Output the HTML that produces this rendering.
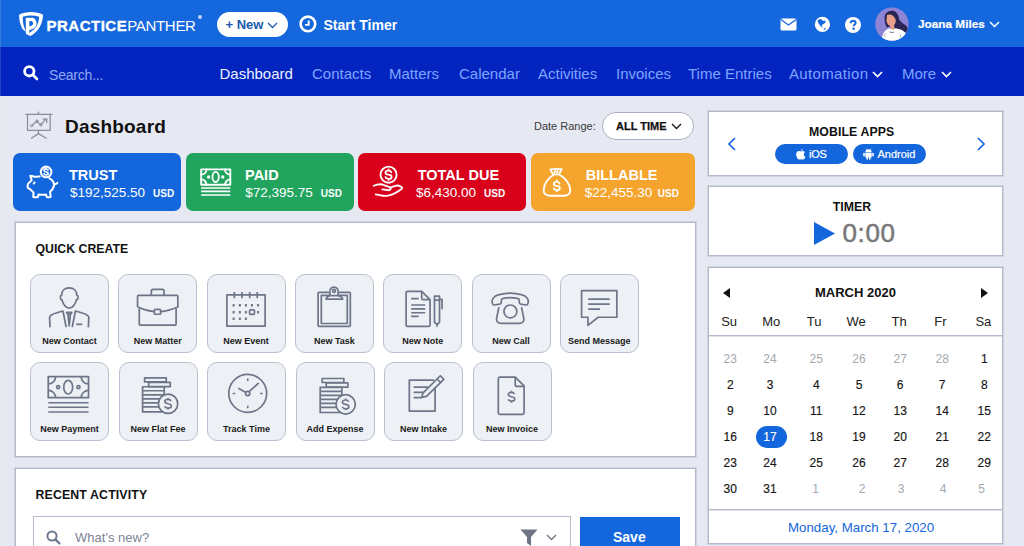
<!DOCTYPE html>
<html><head><meta charset="utf-8">
<style>
*{box-sizing:border-box;margin:0;padding:0}
html,body{width:1024px;height:546px;overflow:hidden}
body{font-family:"Liberation Sans",sans-serif;background:#E6E9F2;position:relative;color:#111}
.a{position:absolute}
.nw{white-space:nowrap}
#top{left:0;top:0;width:1024px;height:47px;background:#1467DC}
#nav{left:0;top:47px;width:1024px;height:49px;background:#0324BE}
.navi{top:64px;font-size:15px;color:#7FA4FF;white-space:nowrap;line-height:20px}
.card{top:153px;height:58px;border-radius:7px;color:#fff}
.ct{position:absolute;left:56px;top:13.5px;font-size:14.5px;font-weight:700;white-space:nowrap;line-height:17px}
.cv{position:absolute;left:57px;top:31px;font-size:13.5px;white-space:nowrap;line-height:17px}
.cv b{font-size:10px;margin-left:8px}
.panel{background:#fff;border:1px solid #B3B9C8;box-shadow:0 0 0 1px rgba(179,185,200,.45)}
.tile{width:79px;height:79px;border:1px solid #B9C0D0;border-radius:10px;background:#EDF0F5}
.tl{position:absolute;left:0;right:0;top:61px;text-align:center;font-size:9px;font-weight:700;color:#1a1a1a;white-space:nowrap;line-height:11px}
.tile svg{position:absolute;left:19px;top:12px}
.cal{font-size:12px;color:#111;text-align:center;width:30px;line-height:14px;white-space:nowrap}
.gr{color:#A5A8AE}
.dk{color:#151515;-webkit-text-stroke:0.15px #151515}
.wh{color:#fff;-webkit-text-stroke:0.15px #fff}
.hd{font-size:13px;color:#222;width:40px;text-align:center;line-height:16px;white-space:nowrap}
</style></head><body>

<!-- TOP BAR -->
<div id="top" class="a"></div>
<div class="a" style="left:0;top:0;width:1px;height:546px;background:rgba(255,255,255,.13);z-index:5"></div>
<svg class="a" style="left:14px;top:8px" width="34" height="32" viewBox="0 0 580 546"><path d="M85,115 C200,55 380,55 495,115 C492,270 420,400 280,478 L205,445 L200,395 C175,385 150,372 140,350 C100,270 88,200 85,115Z" fill="#fff"/><path d="M150,150 C240,122 340,122 428,150 C425,265 372,360 262,425 L205,400 C175,340 158,280 153,230 C150,200 150,175 150,150Z" fill="#1467DC"/><path d="M200,165 H300 C355,165 385,205 385,260 C385,315 350,350 300,365 L262,375 V440 L205,445 Z M262,222 V310 L288,305 C310,300 325,285 325,262 C325,238 310,222 288,222Z" fill="#fff" fill-rule="evenodd"/></svg>
<div class="a nw" style="left:46.5px;top:15.5px;font-size:15px;line-height:20px;color:#fff"><span style="font-weight:700;letter-spacing:0.5px;-webkit-text-stroke:0.35px #fff">PRACTICE</span><span style="letter-spacing:-0.3px">PANTHER</span></div>
<div class="a" style="left:198px;top:14.5px;width:4px;height:4px;border-radius:50%;background:#BFD2F5"></div>

<div class="a" style="left:217px;top:12px;width:71px;height:25px;border-radius:13px;background:#fff"></div>
<div class="a nw" style="left:225.5px;top:16px;font-size:13px;font-weight:700;color:#2059AE;line-height:17px">+ New</div>
<svg class="a" style="left:266.5px;top:22px" width="11" height="7" viewBox="0 0 11 7"><path d="M1 1 L5.5 5.5 L10 1" stroke="#2059AE" stroke-width="1.3" fill="none"/></svg>

<svg class="a" style="left:299px;top:15.3px" width="18" height="18" viewBox="0 0 18 18"><circle cx="8.9" cy="8.9" r="7.3" stroke="#fff" stroke-width="2.6" fill="none"/><path d="M9.7 5.5 V9.9 H6" stroke="#fff" stroke-width="1.9" fill="none"/></svg>
<div class="a nw" style="left:323.5px;top:17px;font-size:14px;font-weight:700;color:#fff;line-height:17px">Start Timer</div>

<svg class="a" style="left:780px;top:18px" width="17" height="13" viewBox="0 0 17 13"><rect x="0.5" y="0.5" width="16" height="12" rx="1.5" fill="#fff"/><path d="M0.8 1.5 L8.5 7 L16.2 1.5" stroke="#1467DC" stroke-width="1.3" fill="none"/></svg>
<svg class="a" style="left:810px;top:12px" width="26" height="26" viewBox="0 0 546 546"><circle cx="261" cy="261" r="160" fill="#fff"/><path d="M158,190 C170,160 200,148 228,152 C250,150 262,165 258,180 C270,190 285,178 300,178 C325,180 335,200 320,225 C305,245 280,250 262,262 C245,275 240,295 258,318 C268,330 282,335 275,340 C255,335 230,315 215,290 C195,260 165,225 158,190Z" fill="#1467DC"/><path d="M285,358 C295,340 320,335 332,348 C335,362 315,378 295,375Z" fill="#1467DC"/></svg>
<svg class="a" style="left:845px;top:16.5px" width="16" height="16" viewBox="0 0 16 16"><circle cx="8" cy="8" r="8" fill="#fff"/><path d="M5.6 6.2 C5.6 4.6 6.7 3.8 8.1 3.8 C9.6 3.8 10.6 4.7 10.6 5.9 C10.6 7.6 8.7 7.6 8.7 9.2" stroke="#1467DC" stroke-width="2" fill="none"/><circle cx="8.6" cy="11.7" r="1.2" fill="#1467DC"/></svg>

<svg class="a" style="left:872px;top:4px" width="40" height="40" viewBox="0 0 546 546"><defs><clipPath id="avc"><circle cx="272" cy="275" r="228"/></clipPath></defs><circle cx="272" cy="275" r="228" fill="#8E84D6"/><g clip-path="url(#avc)"><path d="M172,205 C165,130 215,88 280,92 C345,98 365,160 372,212 C392,255 445,272 475,305 C495,335 485,365 462,385 L330,362 C300,332 292,302 292,282 L205,322 C182,292 172,245 172,205Z" fill="#2A2552"/><path d="M205,150 C245,128 302,150 322,212 C332,262 302,302 262,302 C222,302 202,262 197,222 Z" fill="#E9A088"/><path d="M250,285 L300,285 L312,352 L258,352Z" fill="#E9A088"/><path d="M130,520 C135,410 170,352 240,330 L265,348 C282,354 302,348 322,330 C402,342 452,372 468,422 C470,470 450,510 420,520 Z" fill="#fff"/><path d="M240,382 Q270,395 300,384" stroke="#555a80" stroke-width="12" fill="none"/><path d="M180,400 L172,450 M385,410 L390,455" stroke="#9aa0b8" stroke-width="10" fill="none"/></g></svg>
<div class="a nw" style="left:918px;top:17px;font-size:11.8px;font-weight:700;color:#fff;line-height:14px;-webkit-text-stroke:0.2px #fff">Joana Miles</div>
<svg class="a" style="left:989px;top:21px" width="11" height="7" viewBox="0 0 11 7"><path d="M1 1 L5.5 5.5 L10 1" stroke="#fff" stroke-width="1.5" fill="none"/></svg>

<!-- NAV -->
<div id="nav" class="a"></div>
<svg class="a" style="left:23px;top:65px" width="16" height="16" viewBox="0 0 16 16"><circle cx="6.3" cy="6.3" r="4.7" stroke="#fff" stroke-width="2.8" fill="none"/><path d="M10 10 L14 14" stroke="#fff" stroke-width="2.6" stroke-linecap="round"/></svg>
<div class="a navi" style="left:49px;top:65px;color:#8FAAF2;font-size:14px;letter-spacing:-0.2px">Search...</div>
<div class="a navi" style="left:219.5px;color:#EEF1FF">Dashboard</div>
<div class="a navi" style="left:312px">Contacts</div>
<div class="a navi" style="left:389px">Matters</div>
<div class="a navi" style="left:459px">Calendar</div>
<div class="a navi" style="left:538px">Activities</div>
<div class="a navi" style="left:616px">Invoices</div>
<div class="a navi" style="left:688px">Time Entries</div>
<div class="a navi" style="left:789px;letter-spacing:0.35px">Automation</div>
<svg class="a" style="left:872px;top:71px" width="11" height="7" viewBox="0 0 11 7"><path d="M1 1 L5.5 5.5 L10 1" stroke="#fff" stroke-width="1.7" fill="none"/></svg>
<div class="a navi" style="left:902px">More</div>
<svg class="a" style="left:941px;top:71px" width="11" height="7" viewBox="0 0 11 7"><path d="M1 1 L5.5 5.5 L10 1" stroke="#fff" stroke-width="1.7" fill="none"/></svg>

<!-- DASHBOARD HEADER -->
<svg class="a" style="left:15px;top:100px" width="48" height="50" viewBox="0 0 307 320"><g stroke="#8A8F9C" stroke-width="8" fill="none" stroke-linecap="round"><path d="M150,78 V92 M70,92 H237"/><path d="M80,92 V195 H225 V92"/><path d="M150,195 V215 L105,245 M150,215 L200,245"/><path d="M110,162 L138,136 L163,158 L200,122"/><circle cx="106" cy="165" r="7" stroke-width="6"/><circle cx="140" cy="134" r="7" stroke-width="6"/><circle cx="165" cy="160" r="7" stroke-width="6"/><path d="M180,122 H203 V145" /></g></svg>
<div class="a nw" style="left:65px;top:116px;font-size:19px;font-weight:700;color:#111;line-height:22px;letter-spacing:0.2px">Dashboard</div>

<div class="a nw" style="left:534px;top:119px;font-size:11px;color:#3A3A3A;line-height:14px">Date Range:</div>
<div class="a" style="left:602px;top:112px;width:91.5px;height:27.5px;border-radius:14px;background:#fff;border:1px solid #A9B0BF"></div>
<div class="a nw" style="left:616px;top:119px;font-size:11px;font-weight:700;color:#111;line-height:14px;-webkit-text-stroke:0.25px #111">ALL TIME</div>
<svg class="a" style="left:671px;top:123px" width="11" height="7" viewBox="0 0 11 7"><path d="M1 1 L5.5 5.5 L10 1" stroke="#111" stroke-width="1.3" fill="none"/></svg>

<!-- CARDS -->
<div class="a card" style="left:13px;width:168px;background:#1466DC">
  
  <div class="ct">TRUST</div><div class="cv">$192,525.50<b>USD</b></div>
</div>
<div class="a card" style="left:185.75px;width:168px;background:#21A55E">
  <div class="ct" style="left:59.3px">PAID</div><div class="cv" style="left:59.5px">$72,395.75<b>USD</b></div>
</div>
<div class="a card" style="left:358px;width:168px;background:#D9001C">
  <div class="ct" style="left:59.7px">TOTAL DUE</div><div class="cv" style="left:58px">$6,430.00<b>USD</b></div>
</div>
<div class="a card" style="left:530.75px;width:164.25px;background:#F5A42E">
  <div class="ct" style="left:55px">BILLABLE</div><div class="cv" style="left:54px">$22,455.30<b style="margin-left:5.5px">USD</b></div>
</div>

<!-- QUICK CREATE -->
<div class="a panel" style="left:15px;top:222px;width:681px;height:235px"></div>
<div class="a nw" style="left:35.5px;top:242.3px;font-size:12.3px;font-weight:700;color:#111;line-height:14px">QUICK CREATE</div>

<div class="a tile" style="left:30px;top:274px"><div class="tl">New Contact</div></div>
<div class="a tile" style="left:118.3px;top:274px"><div class="tl">New Matter</div></div>
<div class="a tile" style="left:206.6px;top:274px"><div class="tl">New Event</div></div>
<div class="a tile" style="left:294.9px;top:274px"><div class="tl">New Task</div></div>
<div class="a tile" style="left:383.2px;top:274px"><div class="tl">New Note</div></div>
<div class="a tile" style="left:471.5px;top:274px"><div class="tl">New Call</div></div>
<div class="a tile" style="left:559.8px;top:274px"><div class="tl">Send Message</div></div>

<div class="a tile" style="left:30px;top:362px"><div class="tl">New Payment</div></div>
<div class="a tile" style="left:118.5px;top:362px"><div class="tl">New Flat Fee</div></div>
<div class="a tile" style="left:207px;top:362px"><div class="tl">Track Time</div></div>
<div class="a tile" style="left:295.5px;top:362px"><div class="tl">Add Expense</div></div>
<div class="a tile" style="left:384px;top:362px"><div class="tl">New Intake</div></div>
<div class="a tile" style="left:472.5px;top:362px"><div class="tl">New Invoice</div></div>

<div id="icons">
<svg class="a" style="left:40px;top:280px" width="60" height="55" viewBox="0 0 596 546"><g fill="none" stroke="#6E7588" stroke-width="17" stroke-linejoin="round" stroke-linecap="butt"><path d="M290,78 C245,78 215,105 215,150 C198,155 196,190 218,196 C228,240 258,280 290,280 C322,280 352,240 362,196 C384,190 382,155 365,150 C365,105 335,78 290,78Z"/><path d="M100,470 L95,372 C98,345 130,335 228,308 L260,468"/><path d="M480,470 L485,372 C482,345 450,335 352,308 L320,468"/><path d="M264,322 H316 L302,342 H278Z M278,342 L290,455 L302,342"/><path d="M360,440 H420"/></g></svg>
<svg class="a" style="left:128px;top:280px" width="60" height="55" viewBox="0 0 596 546"><g fill="none" stroke="#6E7588" stroke-width="17" stroke-linejoin="round" stroke-linecap="butt"><path d="M232,150 V112 Q232,94 250,94 H340 Q358,94 358,112 V150"/><path d="M95,268 V162 Q95,152 105,152 H485 Q495,152 495,162 V268 C430,295 370,310 324,314 M262,314 C216,310 156,295 95,268"/><path d="M112,282 V438 Q112,448 122,448 H468 Q478,448 478,438 V282"/><rect x="262" y="292" width="62" height="48" rx="8"/></g></svg>
<svg class="a" style="left:216px;top:280px" width="60" height="55" viewBox="0 0 596 546"><g fill="none" stroke="#6E7588" stroke-width="17" stroke-linejoin="round" stroke-linecap="butt"><rect x="108" y="148" width="380" height="310"/><path d="M182,118 V182 M258,118 V182 M335,118 V182 M410,118 V182"/><path d="M175,238 V262 M237,238 V262 M297,238 V262 M357,238 V262 M418,238 V262 M175,308 V332 M237,308 V332 M297,308 V332 M418,308 V332 M175,373 V397 M237,373 V397 M297,373 V397 " stroke-width="20"/><rect x="334" y="296" width="48" height="46" rx="9"/></g></svg>
<svg class="a" style="left:304px;top:280px" width="60" height="55" viewBox="0 0 596 546"><g fill="none" stroke="#6E7588" stroke-width="17" stroke-linejoin="round" stroke-linecap="butt"><rect x="140" y="122" width="320" height="338" rx="8"/><rect x="172" y="152" width="258" height="280"/><path d="M258,152 V125 A42,42 0 1 1 338,125 V152" fill="#EDF0F5"/><circle cx="298" cy="108" r="14"/><path d="M220,190 Q225,160 258,155 H338 Q375,160 385,190 Z" fill="#EDF0F5"/></g></svg>
<svg class="a" style="left:392px;top:280px" width="60" height="55" viewBox="0 0 596 546"><g fill="none" stroke="#6E7588" stroke-width="17" stroke-linejoin="round" stroke-linecap="butt"><path d="M140,126 Q140,112 154,112 H295 L378,195 V446 Q378,460 364,460 H154 Q140,460 140,446 Z"/><path d="M295,112 V180 Q295,195 310,195 H378"/><path d="M190,185 H265 M190,248 H330 M190,287 H330 M190,325 H330 M190,362 H265"/><path d="M422,160 H472 V200 H422Z M422,200 V420 L447,442 L472,420 V200 M472,192 H497 V290 M447,442 V465"/></g></svg>
<svg class="a" style="left:480px;top:280px" width="60" height="55" viewBox="0 0 596 546"><g fill="none" stroke="#6E7588" stroke-width="17" stroke-linejoin="round" stroke-linecap="butt"><path d="M125,235 C110,200 130,160 190,145 C260,125 340,125 410,145 C470,160 490,200 475,235 Q470,250 455,248 L405,240 Q390,238 390,222 V200 Q390,185 370,182 C330,175 270,175 230,182 Q212,185 212,200 V222 Q212,238 195,240 L145,248 Q130,250 125,235Z"/><path d="M188,270 L165,380 Q160,430 210,430 H390 Q440,430 435,380 L412,270"/><circle cx="302" cy="312" r="64"/></g></svg>
<svg class="a" style="left:568px;top:280px" width="60" height="55" viewBox="0 0 596 546"><g fill="none" stroke="#6E7588" stroke-width="17" stroke-linejoin="round" stroke-linecap="butt"><path d="M135,105 H485 V370 H300 L198,450 V370 H135 Z"/><path d="M200,190 H415 M200,240 H415 M200,290 H318"/></g></svg>
<svg class="a" style="left:40px;top:368px" width="60" height="55" viewBox="0 0 596 546"><g fill="none" stroke="#6E7588" stroke-width="17" stroke-linejoin="round" stroke-linecap="butt"><rect x="82" y="85" width="400" height="210"/><path d="M82,158 A73,73 0 0 0 155,85 M409,85 A73,73 0 0 0 482,158 M155,295 A73,73 0 0 0 82,222 M482,222 A73,73 0 0 0 409,295"/><ellipse cx="280" cy="190" rx="44" ry="68"/><circle cx="180" cy="190" r="15"/><circle cx="382" cy="190" r="15"/><path d="M82,345 H482 M82,390 H482 M82,437 H482" stroke-width="16"/></g></svg>
<svg class="a" style="left:128px;top:368px" width="60" height="55" viewBox="0 0 596 546"><g fill="none" stroke="#6E7588" stroke-width="17" stroke-linejoin="round" stroke-linecap="butt"><g transform="translate(0,0)"><rect x="165" y="98" width="215" height="40"/><rect x="205" y="142" width="215" height="42"/><rect x="145" y="186" width="215" height="250"/><path d="M145,226 H360 M145,266 H360 M145,306 H360 M145,346 H360 M145,386 H360"/><circle cx="398" cy="355" r="96" fill="#EDF0F5"/><path d="M426.8,329.8 C423.2,315.4 408.8,311.8 398.0,311.8 C380.0,311.8 365.6,320.4 365.6,333.4 C365.6,349.2 383.6,352.8 398.0,355.0 C416.0,357.2 430.4,362.2 430.4,378.0 C430.4,391.0 416.0,398.2 398.0,398.2 C383.6,398.2 369.2,392.4 365.6,380.2 M398.0,297.4 V311.8 M398.0,398.2 V412.6" stroke-width="16"/></g></g></svg>
<svg class="a" style="left:217px;top:368px" width="60" height="55" viewBox="0 0 596 546"><g fill="none" stroke="#6E7588" stroke-width="17" stroke-linejoin="round" stroke-linecap="butt"><circle cx="305" cy="252" r="188"/><path d="M305,105 V130 M305,374 V400 M156,253 H182 M428,253 H454"/><path d="M212,202 L283,240 M322,233 L415,148"/><circle cx="305" cy="253" r="21"/></g></svg>
<svg class="a" style="left:305px;top:368px" width="60" height="55" viewBox="0 0 596 546"><g fill="none" stroke="#6E7588" stroke-width="17" stroke-linejoin="round" stroke-linecap="butt"><g transform="translate(6,6)"><rect x="165" y="98" width="215" height="40"/><rect x="205" y="142" width="215" height="42"/><rect x="145" y="186" width="215" height="250"/><path d="M145,226 H360 M145,266 H360 M145,306 H360 M145,346 H360 M145,386 H360"/><circle cx="398" cy="355" r="96" fill="#EDF0F5"/><path d="M426.8,329.8 C423.2,315.4 408.8,311.8 398.0,311.8 C380.0,311.8 365.6,320.4 365.6,333.4 C365.6,349.2 383.6,352.8 398.0,355.0 C416.0,357.2 430.4,362.2 430.4,378.0 C430.4,391.0 416.0,398.2 398.0,398.2 C383.6,398.2 369.2,392.4 365.6,380.2 M398.0,297.4 V311.8 M398.0,398.2 V412.6" stroke-width="16"/></g></g></svg>
<svg class="a" style="left:393px;top:368px" width="60" height="55" viewBox="0 0 596 546"><g fill="none" stroke="#6E7588" stroke-width="17" stroke-linejoin="round" stroke-linecap="butt"><path d="M418,190 V428 H162 V120 H408"/><path d="M205,190 H345 M205,242 H305 M205,294 H285"/><path d="M284,292 L297,250 L470,77 L505,112 L332,282 Z M438,109 L473,144"/></g></svg>
<svg class="a" style="left:481px;top:368px" width="60" height="55" viewBox="0 0 596 546"><g fill="none" stroke="#6E7588" stroke-width="17" stroke-linejoin="round" stroke-linecap="butt"><path d="M172,106 Q172,90 188,90 H340 L428,178 V444 Q428,460 412,460 H188 Q172,460 172,444 Z"/><path d="M340,90 V168 Q340,182 354,182 H428"/><path d="M331.8,259.8 C328.2,245.4 313.8,241.8 303.0,241.8 C285.0,241.8 270.6,250.4 270.6,263.4 C270.6,279.2 288.6,282.8 303.0,285.0 C321.0,287.2 335.4,292.2 335.4,308.0 C335.4,321.0 321.0,328.2 303.0,328.2 C288.6,328.2 274.2,322.4 270.6,310.2 M303.0,226.0 V241.8 M303.0,328.2 V344.0" stroke-width="16"/></g></svg>
<svg class="a" style="left:20px;top:155px" width="50" height="50" viewBox="0 0 546 546"><g fill="none" stroke="#fff" stroke-width="22" stroke-linejoin="round" stroke-linecap="round"><path d="M215,234 C195,232 170,240 155,238 C140,234 125,226 112,226 C115,245 125,262 128,275 C110,290 98,300 92,312 C85,315 82,330 84,350 C86,365 95,370 110,372 C125,390 140,402 148,410 L145,455 C145,460 148,462 155,462 L188,462 C195,462 197,458 198,452 L202,432 C230,436 260,436 285,432 L290,452 C292,458 295,462 302,462 L325,462 C332,462 335,458 335,450 L328,402 C350,385 368,360 372,330 C372,295 350,270 322,255"/><path d="M372,318 C385,322 400,315 408,305"/><path d="M150,312 L160,300"/><circle cx="285" cy="185" r="58"/><path d="M305,165 C300,155 292,152 283,152 C270,152 262,160 262,170 C262,190 308,180 308,200 C308,212 298,218 285,218 C274,218 265,212 262,204" stroke-width="18"/></g></svg>
<svg class="a" style="left:190px;top:155px" width="50" height="50" viewBox="0 0 546 546"><g fill="none" stroke="#fff" stroke-width="20" stroke-linejoin="round" stroke-linecap="round"><rect x="122" y="157" width="318" height="168"/><path d="M122,215 A58,58 0 0 0 180,157 M382,157 A58,58 0 0 0 440,215 M180,325 A58,58 0 0 0 122,267 M440,267 A58,58 0 0 0 382,325"/><ellipse cx="280" cy="240" rx="35" ry="55"/><circle cx="203" cy="240" r="8" fill="#fff"/><circle cx="358" cy="240" r="8" fill="#fff"/><path d="M122,360 H440 M122,398 H440 M122,437 H440" stroke-linecap="butt" stroke-width="18"/></g></svg>
<svg class="a" style="left:362px;top:155px" width="50" height="50" viewBox="0 0 546 546"><g fill="none" stroke="#fff" stroke-width="20" stroke-linejoin="round" stroke-linecap="round"><circle cx="290" cy="215" r="88"/><path d="M320.0,188.8 C316.2,173.8 301.2,170.0 290.0,170.0 C271.2,170.0 256.2,179.0 256.2,192.5 C256.2,209.0 275.0,212.8 290.0,215.0 C308.8,217.2 323.8,222.5 323.8,239.0 C323.8,252.5 308.8,260.0 290.0,260.0 C275.0,260.0 260.0,254.0 256.2,241.2 M290.0,156.5 V170.0 M290.0,260.0 V273.5" stroke-width="20"/><path d="M128,336 C165,320 205,312 240,328 L300,350 C322,360 318,382 292,385 L222,376"/><path d="M305,356 L365,336 C385,330 405,334 418,342 L435,355 C442,362 436,372 420,380 C380,410 322,440 272,446 C232,450 192,436 150,430"/></g></svg>
<svg class="a" style="left:535px;top:155px" width="50" height="50" viewBox="0 0 546 546"><g fill="none" stroke="#fff" stroke-width="20" stroke-linejoin="round" stroke-linecap="round"><path d="M168,158 C210,150 250,150 292,155 L262,212 L198,215 Z"/><path d="M212,195 L222,172 M238,195 L250,172"/><path d="M200,218 C140,252 95,320 95,388 C95,428 120,445 170,445 L312,445 C362,445 385,428 385,388 C385,320 335,252 268,216"/><path d="M268.0,311.8 C264.2,296.8 249.2,293.0 238.0,293.0 C219.2,293.0 204.2,302.0 204.2,315.5 C204.2,332.0 223.0,335.8 238.0,338.0 C256.8,340.2 271.8,345.5 271.8,362.0 C271.8,375.5 256.8,383.0 238.0,383.0 C223.0,383.0 208.0,377.0 204.2,364.2 M238.0,278.0 V293.0 M238.0,383.0 V398.0" stroke-width="20"/></g></svg>
</div><!--/icons-->
<!-- RECENT ACTIVITY -->
<div class="a panel" style="left:15px;top:468px;width:681px;height:100px"></div>
<div class="a nw" style="left:35.5px;top:488px;font-size:12.3px;font-weight:700;color:#111;line-height:14px;letter-spacing:0.15px">RECENT ACTIVITY</div>
<div class="a" style="left:33px;top:516px;width:538px;height:50px;border:1px solid #B6BDCC;background:#fff"></div>
<svg class="a" style="left:46px;top:530px" width="15" height="15" viewBox="0 0 15 15"><circle cx="6" cy="6" r="4.6" stroke="#6F7891" stroke-width="2" fill="none"/><path d="M9.4 9.4 L13.5 13.5" stroke="#6F7891" stroke-width="2.2" stroke-linecap="round"/></svg>
<div class="a nw" style="left:75px;top:530px;font-size:13px;color:#7C8496;line-height:15px">What’s new?</div>
<svg class="a" style="left:520px;top:529px" width="18" height="17" viewBox="0 0 18 17"><path d="M0.5 0.5 H17.5 L11 8 V17 L7 14 V8Z" fill="#6F7484"/></svg>
<svg class="a" style="left:546px;top:534px" width="11" height="7" viewBox="0 0 11 7"><path d="M1 1 L5.5 5.5 L10 1" stroke="#6F7484" stroke-width="1.3" fill="none"/></svg>
<div class="a" style="left:580px;top:517px;width:100px;height:40px;background:#1466DC"></div>
<div class="a nw" style="left:613px;top:529px;font-size:14px;font-weight:700;color:#fff;line-height:17px">Save</div>

<!-- RIGHT COLUMN -->
<div class="a panel" style="left:708px;top:111px;width:295px;height:65px"></div>
<div class="a nw" style="left:809px;top:124.8px;font-size:12.3px;font-weight:700;color:#111;line-height:14px;letter-spacing:0.1px">MOBILE APPS</div>
<svg class="a" style="left:727px;top:137px" width="10" height="14" viewBox="0 0 10 14"><path d="M8 1 L2 7 L8 13" stroke="#1466DC" stroke-width="1.7" fill="none"/></svg>
<svg class="a" style="left:976px;top:137px" width="10" height="14" viewBox="0 0 10 14"><path d="M2 1 L8 7 L2 13" stroke="#1466DC" stroke-width="1.7" fill="none"/></svg>
<div class="a" style="left:775px;top:144px;width:73px;height:20px;border-radius:10px;background:#1466DC"></div>
<svg class="a" style="left:795.5px;top:149px" width="10" height="11" viewBox="0 0 10 11"><path d="M5 2.6 C4 2 2.6 1.9 1.5 2.6 C0.3 3.4 0 5 0.3 6.5 C0.6 8.2 1.6 10.4 2.8 10.6 C3.6 10.7 4.2 10.2 5 10.2 C5.8 10.2 6.4 10.7 7.2 10.6 C8.2 10.4 9 9 9.4 7.8 C8.3 7.3 7.7 6.2 7.8 5.2 C7.8 4.3 8.3 3.6 8.9 3.1 C8.3 2.3 7.3 2 6.5 2.1 C5.9 2.2 5.4 2.4 5 2.6Z M5 2 C5 1 5.8 0.2 6.8 0.1 C6.8 1.1 6 1.9 5 2Z" fill="#fff"/></svg><div class="a nw" style="left:809px;top:148px;font-size:11px;color:#fff;line-height:13px;-webkit-text-stroke:0.2px #fff;letter-spacing:-0.2px">iOS</div>
<div class="a" style="left:853px;top:144px;width:73px;height:20px;border-radius:10px;background:#1466DC"></div>
<svg class="a" style="left:863px;top:147.5px" width="11" height="12" viewBox="0 0 11 12"><path d="M2.3 4.3 A3.2 3 0 0 1 8.7 4.3Z" fill="#fff"/><path d="M3 0.6 L3.9 1.9 M8 0.6 L7.1 1.9" stroke="#fff" stroke-width="0.6"/><rect x="2.3" y="4.8" width="6.4" height="4.6" rx="0.6" fill="#fff"/><rect x="0.2" y="4.8" width="1.6" height="3.8" rx="0.8" fill="#fff"/><rect x="9.2" y="4.8" width="1.6" height="3.8" rx="0.8" fill="#fff"/><rect x="3.4" y="8.5" width="1.6" height="3.2" rx="0.8" fill="#fff"/><rect x="6" y="8.5" width="1.6" height="3.2" rx="0.8" fill="#fff"/></svg><div class="a nw" style="left:877.5px;top:148px;font-size:11px;color:#fff;line-height:13px;-webkit-text-stroke:0.2px #fff">Android</div>

<div class="a panel" style="left:708px;top:186px;width:295px;height:70px"></div>
<div class="a nw" style="left:832.8px;top:199.8px;font-size:12.3px;font-weight:700;color:#111;line-height:14px">TIMER</div>
<svg class="a" style="left:813.5px;top:221.5px" width="21" height="23" viewBox="0 0 21 23"><path d="M0 0 L21 11.5 L0 23Z" fill="#1466DC"/></svg>
<div class="a nw" style="left:842.5px;top:218px;font-size:26px;color:#787878;line-height:30px;letter-spacing:0.6px;-webkit-text-stroke:0.5px #787878">0:00</div>

<div class="a panel" style="left:708px;top:267px;width:295px;height:277px"></div>
<div class="a nw" style="left:815px;top:285px;font-size:13px;font-weight:700;color:#111;line-height:15px">MARCH 2020</div>
<svg class="a" style="left:723px;top:288px" width="7" height="10" viewBox="0 0 7 10"><path d="M7 0 L0 5 L7 10Z" fill="#111"/></svg>
<svg class="a" style="left:981px;top:288px" width="7" height="10" viewBox="0 0 7 10"><path d="M0 0 L7 5 L0 10Z" fill="#111"/></svg>
<div class="a" style="left:709px;top:335px;width:293px;height:1px;background:#B3B9C8"></div><div class="a" style="left:709px;top:336px;width:293px;height:1px;background:rgba(179,185,200,.4)"></div>
<div class="a" style="left:709px;top:509px;width:293px;height:1px;background:#B3B9C8"></div><div class="a" style="left:709px;top:510px;width:293px;height:1px;background:rgba(179,185,200,.4)"></div>
<div class="a nw" style="left:788px;top:520px;font-size:13.3px;color:#1466DC;line-height:15px">Monday, March 17, 2020</div>
<div id="calgrid">
<div class="a hd" style="left:709.1px;top:314.0px">Su</div>
<div class="a hd" style="left:751.2px;top:314.0px">Mo</div>
<div class="a hd" style="left:794.1px;top:314.0px">Tu</div>
<div class="a hd" style="left:836.2px;top:314.0px">We</div>
<div class="a hd" style="left:879.1px;top:314.0px">Th</div>
<div class="a hd" style="left:920.5px;top:314.0px">Fr</div>
<div class="a hd" style="left:963.4px;top:314.0px">Sa</div>
<div class="a cal gr" style="left:715.3px;top:352.2px">23</div>
<div class="a cal gr" style="left:755.0px;top:352.2px">24</div>
<div class="a cal gr" style="left:801.3px;top:352.2px">25</div>
<div class="a cal gr" style="left:844.0px;top:352.2px">26</div>
<div class="a cal gr" style="left:885.2px;top:352.2px">27</div>
<div class="a cal gr" style="left:927.2px;top:352.2px">28</div>
<div class="a cal dk" style="left:969.3px;top:352.2px">1</div>
<div class="a cal dk" style="left:715.3px;top:378.0px">2</div>
<div class="a cal dk" style="left:755.0px;top:378.0px">3</div>
<div class="a cal dk" style="left:801.3px;top:378.0px">4</div>
<div class="a cal dk" style="left:844.0px;top:378.0px">5</div>
<div class="a cal dk" style="left:885.2px;top:378.0px">6</div>
<div class="a cal dk" style="left:927.2px;top:378.0px">7</div>
<div class="a cal dk" style="left:969.3px;top:378.0px">8</div>
<div class="a cal dk" style="left:715.3px;top:403.8px">9</div>
<div class="a cal dk" style="left:755.0px;top:403.8px">10</div>
<div class="a cal dk" style="left:801.3px;top:403.8px">11</div>
<div class="a cal dk" style="left:844.0px;top:403.8px">12</div>
<div class="a cal dk" style="left:885.2px;top:403.8px">13</div>
<div class="a cal dk" style="left:927.2px;top:403.8px">14</div>
<div class="a cal dk" style="left:969.3px;top:403.8px">15</div>
<div class="a cal dk" style="left:715.3px;top:429.8px">16</div>
<div class="a" style="left:755.5px;top:425.5px;width:31px;height:22.5px;border-radius:11.5px;background:#1466DC"></div>
<div class="a cal wh" style="left:755.0px;top:429.8px">17</div>
<div class="a cal dk" style="left:801.3px;top:429.8px">18</div>
<div class="a cal dk" style="left:844.0px;top:429.8px">19</div>
<div class="a cal dk" style="left:885.2px;top:429.8px">20</div>
<div class="a cal dk" style="left:927.2px;top:429.8px">21</div>
<div class="a cal dk" style="left:969.3px;top:429.8px">22</div>
<div class="a cal dk" style="left:715.3px;top:455.8px">23</div>
<div class="a cal dk" style="left:755.0px;top:455.8px">24</div>
<div class="a cal dk" style="left:801.3px;top:455.8px">25</div>
<div class="a cal dk" style="left:844.0px;top:455.8px">26</div>
<div class="a cal dk" style="left:885.2px;top:455.8px">27</div>
<div class="a cal dk" style="left:927.2px;top:455.8px">28</div>
<div class="a cal dk" style="left:969.3px;top:455.8px">29</div>
<div class="a cal dk" style="left:715.3px;top:481.7px">30</div>
<div class="a cal dk" style="left:755.0px;top:481.7px">31</div>
<div class="a cal gr" style="left:800.5px;top:481.7px">1</div>
<div class="a cal gr" style="left:847.0px;top:481.7px">2</div>
<div class="a cal gr" style="left:886.0px;top:481.7px">3</div>
<div class="a cal gr" style="left:928.0px;top:481.7px">4</div>
<div class="a cal gr" style="left:966.6px;top:481.7px">5</div>
</div>

</body></html>
